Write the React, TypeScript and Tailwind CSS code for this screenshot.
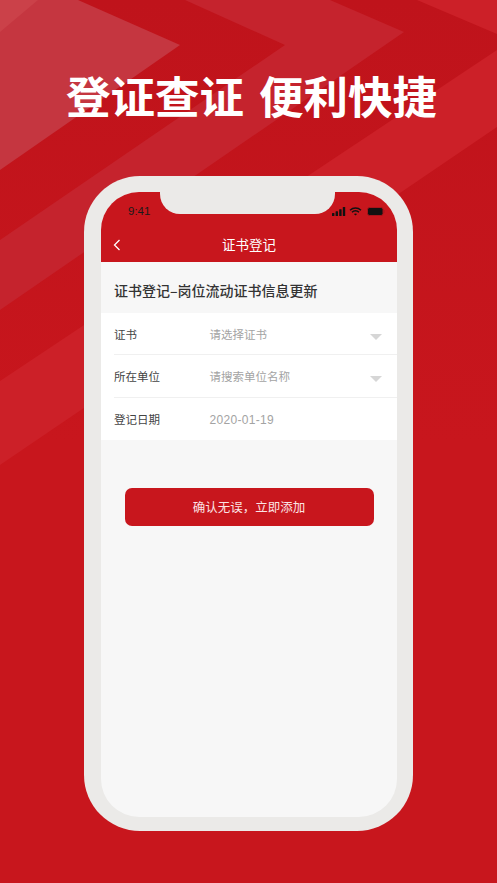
import React from 'react';

const cjk = "font-['Noto_Sans_CJK_SC','Noto_Sans',sans-serif]";

const Background: React.FC = () => (
  <svg className="absolute inset-0" width="497" height="883" viewBox="0 0 497 883">
    <defs>
      <linearGradient id="shade" x1="0" y1="0" x2="0" y2="1">
        <stop offset="0" stopColor="#bf131b" />
        <stop offset="0.5" stopColor="#c8161d" />
        <stop offset="1" stopColor="#c8161d" />
      </linearGradient>
    </defs>
    <rect width="497" height="883" fill="url(#shade)" />
    <polygon points="78,0 180,45 0,170 0,0" fill="#c53640" />
    <polygon points="0,0 38,0 0,32" fill="#cb4149" />
    <polygon points="185,0 330,0 404,32 0,310 0,240 285,45" fill="#c5232d" />
    <polygon points="417,0 497,0 497,34 417,0" fill="#cc2028" />
    <polygon points="497,50 497,127 0,465 0,381" fill="#cc2028" />
  </svg>
);

const StatusIcons: React.FC = () => (
  <div className="flex items-center gap-[3px]">
    <svg width="14" height="9" viewBox="0 0 14 9" fill="#111">
      <rect x="0" y="6" width="2.4" height="3" rx="0.5" />
      <rect x="3.6" y="4.2" width="2.4" height="4.8" rx="0.5" />
      <rect x="7.2" y="2.2" width="2.4" height="6.8" rx="0.5" />
      <rect x="10.8" y="0" width="2.4" height="9" rx="0.5" />
    </svg>
    <svg width="13" height="9" viewBox="0 0 13 9" fill="none" stroke="#111" strokeWidth="1.5">
      <path d="M1 3.2 C4.2 0.2 8.8 0.2 12 3.2" />
      <path d="M3 5.2 C5 3.4 8 3.4 10 5.2" />
      <path d="M6.5 8.6 L4.9 6.9 C5.8 6.2 7.2 6.2 8.1 6.9 Z" fill="#111" stroke="none" />
    </svg>
    <svg width="18" height="9" viewBox="0 0 18 9" className="ml-[2px]">
      <rect x="0.5" y="0.5" width="15.5" height="8" rx="2" fill="#111" stroke="#a8141a" />
      <rect x="16.5" y="3" width="1" height="3" fill="#a8141a" />
    </svg>
  </div>
);

const Triangle: React.FC = () => (
  <svg width="12" height="6" viewBox="0 0 12 6" className="absolute right-[15px] top-[21px]">
    <polygon points="0,0 12,0 6,6" fill="#d6d6d6" />
  </svg>
);

const Row: React.FC<{ label: string; value: string; arrow?: boolean; last?: boolean; mono?: boolean }> = ({ label, value, arrow, last, mono }) => (
  <div className="relative pl-[13px] h-[42.33px]">
    <div className={`flex items-center h-full pt-[2px] ${last ? '' : 'border-b border-[#f0f0f0]'}`}>
      <span className="w-[95.5px] text-[11.5px] text-[#444]">{label}</span>
      {mono ? (
        <span className="text-[12px] tracking-[0.3px] text-[#a3a3a3] font-['Liberation_Sans',sans-serif]">{value}</span>
      ) : (
        <span className="text-[11.5px] text-[#a3a3a3]">{value}</span>
      )}
    </div>
    {arrow && <Triangle />}
  </div>
);

const App: React.FC = () => {
  return (
    <div className={`relative w-[497px] h-[883px] overflow-hidden ${cjk}`}>
      <Background />
      <div className="relative flex flex-col items-center h-full">
        <h1 className="mt-[68px] h-[108px] text-[44.5px] leading-[54px] font-bold text-white whitespace-nowrap pl-[6px]">
          登证查证<span className="inline-block w-[15px]" />便利快捷
        </h1>
        <div className="w-[329px] h-[655px] rounded-[56px] bg-[#ebeae8] pt-[16px] px-[17px]">
          <div className="relative w-[296px] h-[625px] rounded-[38px] overflow-hidden bg-[#f7f7f7]">
            <div className="absolute left-[59px] top-0 w-[175px] h-[22px] rounded-b-[20px] bg-[#ebeae8]" />
            <header className="h-[70px] bg-[#c8161d] text-white">
              <div className="flex items-center justify-between h-[38px] pt-[1px] pl-[27px] pr-[12px]">
                <span className="text-[11.5px] text-[#1a1a1a] font-['Liberation_Sans',sans-serif]">9:41</span>
                <StatusIcons />
              </div>
              <div className="relative flex items-center justify-center h-[32px] pb-[4px]">
                <svg width="8" height="12" viewBox="0 0 8 12" fill="none" stroke="#fff" strokeWidth="1.3" className="absolute left-[12px] top-[9px]">
                  <path d="M6.5 1 L1.5 6 L6.5 11" />
                </svg>
                <span className="text-[13.5px]">证书登记</span>
              </div>
            </header>
            <div className="flex items-center h-[51px] pl-[13px] pt-[6px] text-[14px] font-medium text-[#333]">
              证书登记–岗位流动证书信息更新
            </div>
            <div className="bg-white">
              <Row label="证书" value="请选择证书" arrow />
              <Row label="所在单位" value="请搜索单位名称" arrow />
              <Row label="登记日期" value="2020-01-19" last mono />
            </div>
            <button className="block mt-[48px] mx-auto w-[249px] h-[38px] rounded-[7px] bg-[#c8161d] text-[12.5px] text-[#fbe3e4]">
              确认无误，立即添加
            </button>
          </div>
        </div>
      </div>
    </div>
  );
};

export default App;
